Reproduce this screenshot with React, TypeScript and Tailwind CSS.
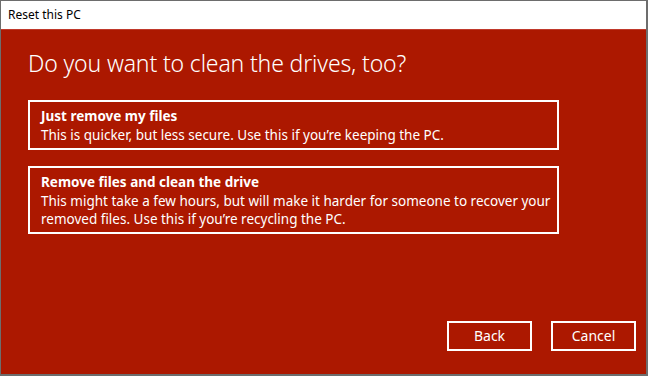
export default function App() {
  return (
    <div
      className="w-[648px] h-[376px] bg-[#6d6d6d] pt-px pl-px pr-[2px] pb-[2px] flex flex-col overflow-hidden"
      style={{ fontFamily: '"Noto Sans", "Open Sans", sans-serif' }}
    >
      {/* title bar */}
      <div className="h-[28px] bg-white flex items-center pl-[7px] text-[12px] text-black">
        Reset this PC
      </div>

      {/* body */}
      <div className="flex-1 bg-[#ac1800] border-t border-[#c0392b] flex flex-col text-white">
        <h1 className="mt-[18px] ml-[27px] text-[23px] font-light leading-[30px] tracking-[-0.15px]">
          Do you want to clean the drives, too?
        </h1>

        <div className="mt-[22px] ml-[27px] flex flex-col gap-[16px] w-[531px]">
          <button className="border-2 border-white pl-[11px] pr-[4px] pt-[5px] pb-[4px] text-left text-[13.5px] whitespace-nowrap">
            <div className="font-bold leading-[19px]">Just remove my files</div>
            <div className="leading-[18px]">This is quicker, but less secure. Use this if you’re keeping the PC.</div>
          </button>
          <button className="border-2 border-white pl-[11px] pr-[4px] pt-[5px] pb-[4px] text-left text-[13.5px] whitespace-nowrap">
            <div className="font-bold leading-[19px]">Remove files and clean the drive</div>
            <div className="leading-[18px]">
              This might take a few hours, but will make it harder for someone to recover your
              <br />
              removed files. Use this if you’re recycling the PC.
            </div>
          </button>
        </div>

        <div className="mt-auto mb-[23px] mr-[10px] flex justify-end gap-[19px]">
          <button className="w-[85px] h-[30px] border-2 border-white text-[14px] leading-none">
            Back
          </button>
          <button className="w-[85px] h-[30px] border-2 border-white text-[14px] leading-none">
            Cancel
          </button>
        </div>
      </div>
    </div>
  );
}
